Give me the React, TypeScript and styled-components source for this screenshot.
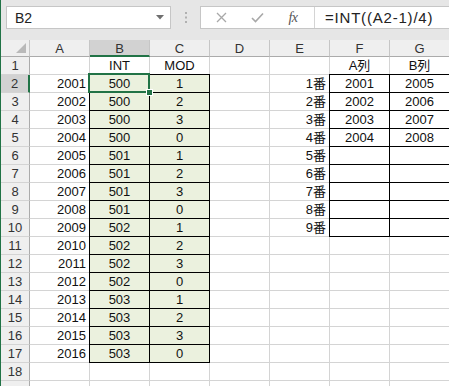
import React from 'react';
import styled, { createGlobalStyle, css } from 'styled-components';

const GlobalStyle = createGlobalStyle`
  html, body {
    margin: 0;
    padding: 0;
    background: #fff;
  }
  body {
    font-family: "Liberation Sans", "Noto Sans CJK JP", sans-serif;
  }
`;

const GREEN = '#217346';
const GRID = '#d4d4d4';

const Window = styled.div`
  width: 449px;
  height: 386px;
  overflow: hidden;
  display: flex;
  flex-direction: column;
  background: #e6e6e6;
  border-left: 1px solid ${GREEN};
  box-sizing: border-box;
`;

const FormulaBar = styled.div`
  height: 40px;
  flex: none;
  display: flex;
  align-items: flex-start;
  padding: 6px 0 0 5px;
  box-sizing: border-box;
`;

const NameBox = styled.div`
  width: 165px;
  height: 23px;
  box-sizing: border-box;
  background: #fff;
  border: 1px solid #c6c6c6;
  display: flex;
  align-items: center;
  justify-content: space-between;
  padding: 0 6px 0 8px;
  font-size: 14px;
  color: #222;
`;

const Grip = styled.div`
  width: 29px;
  height: 23px;
  display: flex;
  align-items: center;
  justify-content: center;
`;

const FxBox = styled.div`
  flex: 1;
  height: 23px;
  box-sizing: border-box;
  background: #fff;
  border: 1px solid #c6c6c6;
  border-right: none;
  display: flex;
  align-items: stretch;
  padding-left: 2px;
`;

const BarButton = styled.div`
  width: 36px;
  display: flex;
  align-items: center;
  justify-content: center;
  color: #a0a0a0;
`;

const FxLabel = styled.span`
  font-family: "Liberation Serif", serif;
  font-style: italic;
  font-size: 14px;
  color: #555;
  letter-spacing: -0.5px;
`;

const FormulaInput = styled.div`
  flex: 1;
  margin-left: 3px;
  border-left: 1px solid #d4d4d4;
  padding-left: 10px;
  display: flex;
  align-items: center;
  font-size: 15px;
  letter-spacing: 0.8px;
  color: #222;
  white-space: nowrap;
`;

const Sheet = styled.div`
  flex: 1;
  display: grid;
  grid-template-columns: 29px repeat(7, 60px);
  grid-template-rows: 17px repeat(19, 18px);
  background: #fff;
  font-size: 13px;
`;

const HeaderBase = css`
  box-sizing: border-box;
  background: #efefef;
  color: #333;
  display: flex;
  align-items: center;
  justify-content: center;
  font-size: 13px;
`;

const Corner = styled.div`
  ${HeaderBase};
  position: relative;
  border-right: 1px solid #c6c6c6;
  border-bottom: 1px solid #ababab;

  &::after {
    content: '';
    position: absolute;
    right: 3px;
    bottom: 3px;
    border-style: solid;
    border-width: 0 0 10px 10px;
    border-color: transparent transparent #b9b9b9 transparent;
  }
`;

const ColHeader = styled.div<{ $active?: boolean }>`
  ${HeaderBase};
  border-right: 1px solid #c6c6c6;
  border-bottom: ${(p) => (p.$active ? `2px solid ${GREEN}` : '1px solid #ababab')};
  background: ${(p) => (p.$active ? '#d2d2d2' : '#efefef')};
  padding-top: ${(p) => (p.$active ? '1px' : '0')};
`;

const RowHeader = styled.div<{ $active?: boolean }>`
  ${HeaderBase};
  border-bottom: 1px solid ${GRID};
  border-right: ${(p) => (p.$active ? `2px solid ${GREEN}` : '1px solid #ababab')};
  background: ${(p) => (p.$active ? '#d2d2d2' : '#efefef')};
`;

const Cell = styled.div<{ $align: string; $fill?: boolean; $boxed?: boolean }>`
  position: relative;
  box-sizing: border-box;
  border-right: 1px solid ${GRID};
  border-bottom: 1px solid ${GRID};
  background: ${(p) => (p.$fill ? '#ebf1de' : '#fff')};
  padding: 0 3px;
  line-height: 17px;
  text-align: ${(p) => p.$align};
  white-space: nowrap;
  color: #111;

  ${(p) =>
    p.$boxed &&
    css`
      &::after {
        content: '';
        position: absolute;
        inset: -1px;
        border: 1px solid #000;
        pointer-events: none;
      }
    `}
`;

const Selection = styled.span`
  position: absolute;
  top: -2px;
  left: -2px;
  right: -1px;
  bottom: -1px;
  border: 2px solid ${GREEN};
  z-index: 2;
`;

const Handle = styled.span`
  position: absolute;
  right: -5px;
  bottom: -5px;
  width: 5px;
  height: 5px;
  background: ${GREEN};
  border: 1px solid #fff;
`;

const COLS = ['A', 'B', 'C', 'D', 'E', 'F', 'G'];

type CellData = { text: string; align: string; fill?: boolean; boxed?: boolean };

function cellFor(row: number, col: string): CellData {
  const inData = row >= 2 && row <= 17;
  if (row === 1) {
    const head: Record<string, string> = { B: 'INT', C: 'MOD', F: 'A列', G: 'B列' };
    return { text: head[col] || '', align: 'center' };
  }
  switch (col) {
    case 'A':
      return { text: inData ? String(1999 + row) : '', align: 'right' };
    case 'B':
      return {
        text: inData ? String(Math.floor((1999 + row - 1) / 4)) : '',
        align: 'center',
        fill: inData,
        boxed: inData,
      };
    case 'C':
      return { text: inData ? String((1999 + row) % 4) : '', align: 'center', fill: inData, boxed: inData };
    case 'E':
      return { text: row >= 2 && row <= 10 ? `${row - 1}番` : '', align: 'right' };
    case 'F':
      return { text: row >= 2 && row <= 5 ? String(1999 + row) : '', align: 'center', boxed: row >= 2 && row <= 10 };
    case 'G':
      return { text: row >= 2 && row <= 5 ? String(2003 + row) : '', align: 'center', boxed: row >= 2 && row <= 10 };
    default:
      return { text: '', align: 'left' };
  }
}

// row 19 only peeks in at the bottom edge, its label is hidden
const ROWS = Array.from({ length: 19 }, (_, i) => i + 1);

export default function App() {
  return (
    <Window>
      <GlobalStyle />
      <FormulaBar>
        <NameBox>
          <span>B2</span>
          <svg width="8" height="5" viewBox="0 0 8 5">
            <path d="M0 0 L8 0 L4 4.5 Z" fill="#6f6f6f" />
          </svg>
        </NameBox>
        <Grip>
          <svg width="2" height="11" viewBox="0 0 2 11">
            <rect x="0" y="0" width="2" height="2" fill="#b0b0b0" />
            <rect x="0" y="4.5" width="2" height="2" fill="#b0b0b0" />
            <rect x="0" y="9" width="2" height="2" fill="#b0b0b0" />
          </svg>
        </Grip>
        <FxBox>
          <BarButton>
            <svg width="11" height="11" viewBox="0 0 11 11">
              <path d="M1 1 L10 10 M10 1 L1 10" stroke="#a8a8a8" strokeWidth="1.3" />
            </svg>
          </BarButton>
          <BarButton>
            <svg width="13" height="11" viewBox="0 0 13 11">
              <path d="M1 6 L4.5 9.5 L12 1.5" stroke="#a8a8a8" strokeWidth="1.6" fill="none" />
            </svg>
          </BarButton>
          <BarButton>
            <FxLabel>fx</FxLabel>
          </BarButton>
          <FormulaInput>=INT((A2-1)/4)</FormulaInput>
        </FxBox>
      </FormulaBar>
      <Sheet>
        <Corner />
        {COLS.map((c) => (
          <ColHeader key={c} $active={c === 'B'}>
            {c}
          </ColHeader>
        ))}
        {ROWS.map((r) => (
          <React.Fragment key={r}>
            <RowHeader $active={r === 2}>{r < 19 ? r : ''}</RowHeader>
            {COLS.map((c) => {
              const d = cellFor(r, c);
              return (
                <Cell key={c} $align={d.align} $fill={d.fill} $boxed={d.boxed}>
                  {d.text}
                  {r === 2 && c === 'B' && (
                    <Selection>
                      <Handle />
                    </Selection>
                  )}
                </Cell>
              );
            })}
          </React.Fragment>
        ))}
      </Sheet>
    </Window>
  );
}
